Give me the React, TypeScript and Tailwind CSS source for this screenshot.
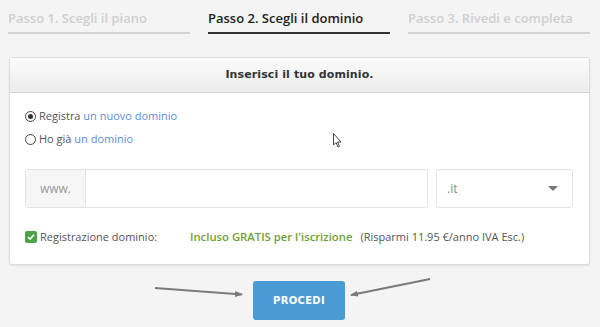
import React from 'react';

const steps = [
  { label: 'Passo 1. Scegli il piano', active: false },
  { label: 'Passo 2. Scegli il dominio', active: true },
  { label: 'Passo 3. Rivedi e completa', active: false },
];

export default function App() {
  return (
    <div
      className="relative w-[600px] h-[327px] overflow-hidden bg-[#f4f4f4] text-[#555]"
      style={{ fontFamily: '"Open Sans", "Liberation Sans", sans-serif' }}
    >
      {/* Steps */}
      <div className="flex gap-[18px] pl-2 pt-[8px]">
        {steps.map((s) => (
          <div
            key={s.label}
            className={`w-[182px] h-[26px] border-b-2 text-[13px] font-semibold leading-[20px] ${
              s.active ? 'border-[#333] text-[#222]' : 'border-[#d2d2d2] text-[#cfcfcf]'
            }`}
          >
            {s.label}
          </div>
        ))}
      </div>

      {/* Card */}
      <div className="ml-[9px] mt-[23px] w-[581px] h-[208px] bg-white border border-[#dcdcdc] rounded-[3px] shadow-[0_1px_2px_rgba(0,0,0,0.08)]">
        <div className="h-[35px] flex items-center justify-center border-b border-[#d2d2d2] rounded-t-[3px] bg-gradient-to-b from-[#fbfbfb] to-[#ececec]">
          <span
            className="text-[11px] font-bold text-[#333] tracking-[0.1px]"
            style={{ fontFamily: '"DejaVu Sans", "Open Sans", sans-serif' }}
          >
            Inserisci il tuo dominio.
          </span>
        </div>

        <div className="px-[15px] pt-[14px]">
          <div className="flex flex-col gap-[5px] text-[11px]">
            <label className="flex items-center gap-[3px] h-[18px]">
              <span className="w-[11px] h-[11px] rounded-full border border-[#444] flex items-center justify-center">
                <span className="w-[5px] h-[5px] rounded-full bg-[#333]" />
              </span>
              <span>
                Registra <span className="text-[#5b8dd6]">un nuovo dominio</span>
              </span>
            </label>
            <label className="flex items-center gap-[3px] h-[18px]">
              <span className="w-[11px] h-[11px] rounded-full border border-[#444]" />
              <span>
                Ho già <span className="text-[#5b8dd6]">un dominio</span>
              </span>
            </label>
          </div>

          <div className="flex gap-[8px] mt-[21px]">
            <div className="flex w-[403px] h-[39px] border border-[#e3e3e3] rounded-[3px] overflow-hidden">
              <div className="w-[60px] bg-[#f6f6f6] border-r border-[#e3e3e3] flex items-center justify-center text-[12px] text-[#999]">
                www.
              </div>
              <div className="flex-1 bg-white" />
            </div>
            <div className="w-[137px] h-[39px] border border-[#e3e3e3] rounded-[3px] flex items-center justify-between pl-[10px] pr-[14px] text-[12px] text-[#888]">
              <span>.it</span>
              <span className="w-0 h-0 border-l-[5px] border-r-[5px] border-t-[5px] border-l-transparent border-r-transparent border-t-[#777]" />
            </div>
          </div>

          <div className="flex items-center mt-[21px] h-[16px] text-[11px]">
            <span className="w-[12px] h-[12px] rounded-[2px] bg-[#4ea24a] flex items-center justify-center">
              <svg width="8" height="8" viewBox="0 0 8 8">
                <path d="M1 4.2 L3.1 6.1 L7 1.8" stroke="white" strokeWidth="1.6" fill="none" />
              </svg>
            </span>
            <span className="ml-[3px] w-[150px]">Registrazione dominio:</span>
            <span className="font-semibold text-[11.3px] text-[#6e9f3a]">Incluso GRATIS per l'iscrizione</span>
            <span className="ml-[8px]">(Risparmi 11.95 €/anno IVA Esc.)</span>
          </div>
        </div>
      </div>

      {/* Button */}
      <div className="flex justify-center mt-[16px]">
        <button
          className="ml-[-2px] w-[92px] h-[39px] rounded-[3px] bg-[#4b9ad4] text-white text-[10px] font-bold tracking-[0.3px]"
          style={{ fontFamily: '"DejaVu Sans", "Open Sans", sans-serif' }}
        >
          PROCEDI
        </button>
      </div>

      {/* Annotation arrows */}
      <svg className="absolute left-0 top-0 pointer-events-none" width="600" height="327">
        <defs>
          <marker id="ah" markerWidth="8" markerHeight="6" refX="7" refY="3" orient="auto" markerUnits="userSpaceOnUse">
            <path d="M0 0 L8 3 L0 6 z" fill="#7a7a7a" />
          </marker>
        </defs>
        <path d="M155 288 L242 294.5" stroke="#7a7a7a" strokeWidth="2" fill="none" markerEnd="url(#ah)" />
        <path d="M430 279 L351 295" stroke="#7a7a7a" strokeWidth="2" fill="none" markerEnd="url(#ah)" />
        {/* mouse cursor */}
        <path
          d="M333.5 133.5 L333.5 145 L336 142.5 L338 147 L339.5 146.3 L337.6 142 L341 142 Z"
          fill="white"
          stroke="#444"
          strokeWidth="1"
        />
      </svg>
    </div>
  );
}
